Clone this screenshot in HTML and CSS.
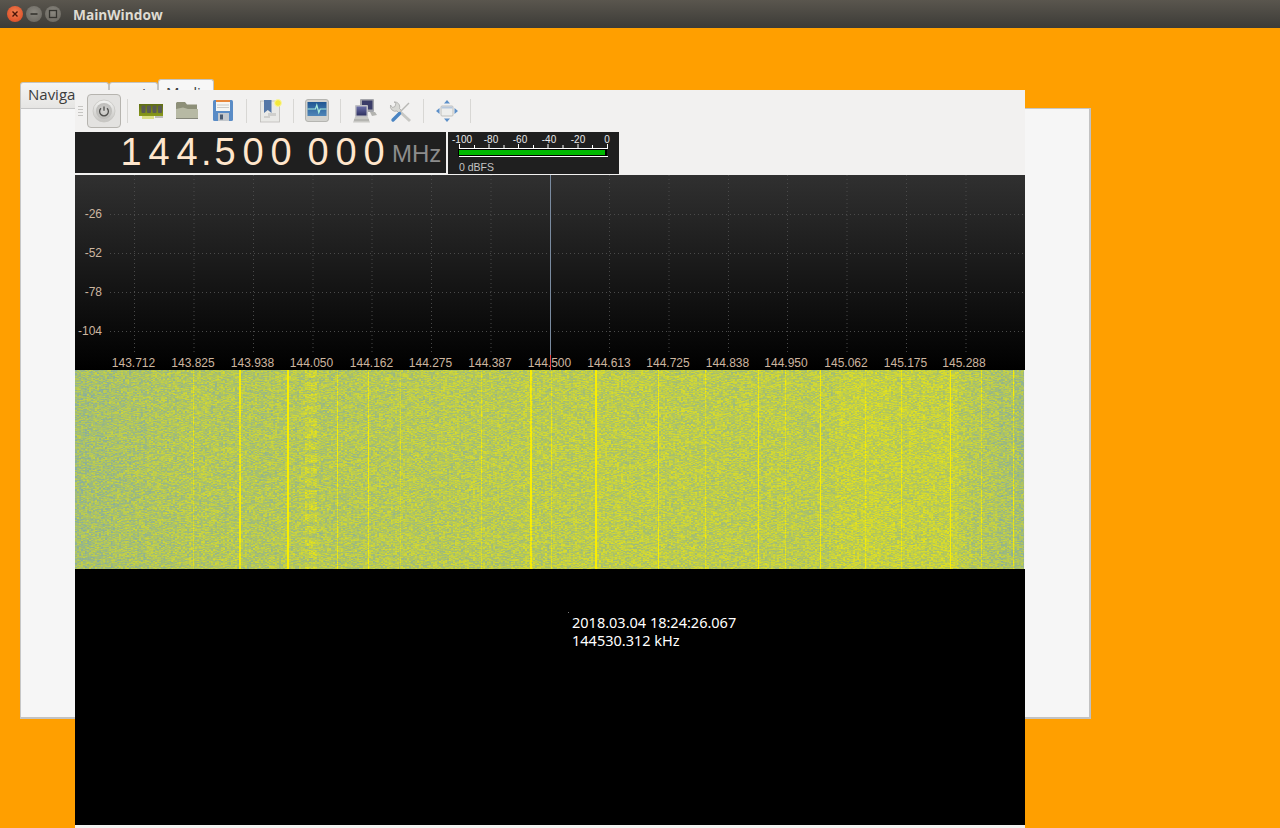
FILE: index.html
```html
<!DOCTYPE html>
<html lang="en">
<head>
  <meta charset="UTF-8">
  <title>MainWindow</title>
  <link rel="stylesheet" href="styles.css">
</head>
<body>
  <div class="titlebar">
    <div class="win-buttons">
      <span class="win-btn close">
        <svg width="10" height="10" viewBox="0 0 10 10"><path d="M2.5 2.5l5 5M7.5 2.5l-5 5" stroke="#4a1408" stroke-width="1.4"/></svg>
      </span>
      <span class="win-btn">
        <svg width="10" height="10" viewBox="0 0 10 10"><path d="M1.5 5h7" stroke="#35342f" stroke-width="1.6"/></svg>
      </span>
      <span class="win-btn">
        <svg width="10" height="10" viewBox="0 0 10 10"><rect x="1.5" y="1.5" width="7" height="7" fill="none" stroke="#35342f" stroke-width="1.3"/></svg>
      </span>
    </div>
    <span class="win-title">MainWindow</span>
  </div>

  <div class="tabwidget">
    <div class="tabbar">
      <div class="tab tab-nav">Navigation</div>
      <div class="tab tab-mid">Audio</div>
      <div class="tab tab-active">Media</div>
    </div>
    <div class="tabpanel"></div>
  </div>

  <div class="sdr">
    <div class="toolbar">
      <div class="grip"></div>
      <button class="tool tool-on">
        <svg width="26" height="26" viewBox="0 0 26 26">
          <defs>
            <linearGradient id="pw" x1="0" y1="0" x2="0" y2="1"><stop offset="0" stop-color="#f4f4f2"/><stop offset="1" stop-color="#c4c3c0"/></linearGradient>
            <radialGradient id="pw2"><stop offset="0" stop-color="#d6d5d2"/><stop offset="1" stop-color="#bdbcb9"/></radialGradient>
          </defs>
          <circle cx="13" cy="13" r="11" fill="url(#pw)" stroke="#c6c5c2" stroke-width="0.8"/>
          <circle cx="13" cy="13" r="8" fill="url(#pw2)"/>
          <path d="M10 10.2a4.4 4.4 0 1 0 6 0" fill="none" stroke="#4f4f4d" stroke-width="1.3"/>
          <path d="M13 8.4v4.4" stroke="#4f4f4d" stroke-width="1.3"/>
        </svg>
      </button>
      <div class="sep"></div>
      <button class="tool">
        <svg width="26" height="26" viewBox="0 0 26 26">
          <defs>
            <linearGradient id="board" x1="0" y1="0" x2="0" y2="1"><stop offset="0" stop-color="#5f6e12"/><stop offset="1" stop-color="#8a9a1c"/></linearGradient>
          </defs>
          <rect x="1" y="6" width="24" height="12" fill="url(#board)"/>
          <rect x="3.500" y="7.500" width="4" height="7.500" rx="1" fill="#5a5b54"/>
          <rect x="9" y="7.500" width="4" height="7.500" rx="1" fill="#5a5b54"/>
          <rect x="14.500" y="7.500" width="4" height="7.500" rx="1" fill="#5a5b54"/>
          <rect x="20" y="7.500" width="4" height="7.500" rx="1" fill="#5a5b54"/>
          <path d="M5 18v3M7 18v3M9 18v3M11 18v3M13 18v3M15 18v3" stroke="#c8d030" stroke-width="1.1"/>
          <rect x="17" y="18" width="8" height="2" fill="#8a8a80" opacity="0.5"/>
        </svg>
      </button>
      <button class="tool">
        <svg width="26" height="26" viewBox="0 0 26 26">
          <path d="M3 4h8l2 2.500h10v6H2V5z" fill="#8d8f78"/>
          <path d="M2 11l7-1.500 5 1.500h10v9a1 1 0 0 1-1 1H3a1 1 0 0 1-1-1z" fill="#b7b9a4"/>
          <path d="M2 20h22v1H2z" fill="#85867a"/>
        </svg>
      </button>
      <button class="tool">
        <svg width="26" height="26" viewBox="0 0 26 26">
          <rect x="3" y="2" width="20" height="21" rx="1.500" fill="#5a8cc6"/>
          <rect x="6" y="2" width="14" height="11" fill="#f6f6f2"/>
          <rect x="6" y="2" width="14" height="2" fill="#e8883a"/>
          <path d="M7 7h12M7 9.500h12" stroke="#c0c0bc" stroke-width="0.8"/>
          <rect x="8" y="15" width="11" height="8" fill="#c4c8cc"/>
          <rect x="10" y="16.500" width="3" height="5" fill="#4a5a70"/>
        </svg>
      </button>
      <div class="sep"></div>
      <button class="tool">
        <svg width="26" height="26" viewBox="0 0 26 26">
          <rect x="3.500" y="3" width="19" height="21" fill="#e9e9e6" stroke="#bdbcb8" stroke-width="0.8"/>
          <path d="M7 2h7.500v13l-3.700-3-3.800 3z" fill="#5577a6"/>
          <path d="M11 15h8v3h-8zM7 18h6v2H7z" fill="#cfcfcc"/>
          <circle cx="21" cy="5" r="3.400" fill="#f4e83a" stroke="#faf6a0" stroke-width="1"/>
        </svg>
      </button>
      <div class="sep"></div>
      <button class="tool">
        <svg width="26" height="26" viewBox="0 0 26 26">
          <defs>
            <linearGradient id="scr" x1="0" y1="0" x2="0" y2="1"><stop offset="0" stop-color="#1f5692"/><stop offset="1" stop-color="#4f86b8"/></linearGradient>
          </defs>
          <rect x="1.500" y="1.500" width="23" height="22" rx="2.500" fill="#d2d2ce" stroke="#a9a9a5" stroke-width="0.8"/>
          <rect x="3.500" y="4" width="19" height="14" fill="url(#scr)"/>
          <path d="M3.500 11h8l1.300-4 2 7.500 1.400-3.500h6.300" fill="none" stroke="#a8ecdc" stroke-width="1.200"/>
        </svg>
      </button>
      <div class="sep"></div>
      <button class="tool">
        <svg width="26" height="26" viewBox="0 0 26 26">
          <defs>
            <linearGradient id="crt" x1="0" y1="0" x2="0" y2="1"><stop offset="0" stop-color="#6a6ea8"/><stop offset="1" stop-color="#2e3060"/></linearGradient>
          </defs>
          <rect x="9" y="1" width="14" height="13" rx="1" fill="#a4a5aa"/>
          <rect x="11" y="2.500" width="10.500" height="9" fill="#3a3c68"/>
          <path d="M19 14h5l2 3-5 1z" fill="#b4b4b0"/>
          <rect x="4" y="7" width="13" height="12" rx="1" fill="#c0c0c4"/>
          <rect x="5.500" y="8.500" width="10" height="9" fill="url(#crt)"/>
          <path d="M4 19h13l2 5.500H2z" fill="#c8c8c4"/>
          <path d="M3 22h15" stroke="#989894" stroke-width="0.8"/>
        </svg>
      </button>
      <button class="tool">
        <svg width="26" height="26" viewBox="0 0 26 26">
          <path d="M10 11L23 23" stroke="#c8c8c4" stroke-width="3"/>
          <path d="M9 5l-1 3.500-2.500 1L3.500 7a5 5 0 0 0 6.500 6l2 2 2.500-2.500-2-2A5 5 0 0 0 7 4z" fill="#d8d8d4" stroke="#a4a4a0" stroke-width="0.7"/>
          <path d="M22 5l-9 9" stroke="#b8b8b4" stroke-width="1.500"/>
          <path d="M12.500 15.500L6 22" stroke="#4a84c2" stroke-width="3.400" stroke-linecap="round"/>
        </svg>
      </button>
      <div class="sep"></div>
      <button class="tool">
        <svg width="26" height="26" viewBox="0 0 26 26">
          <rect x="7" y="8" width="12" height="10" rx="1" fill="#eeeeec" stroke="#b4b4b0" stroke-width="0.8"/>
          <rect x="7.500" y="8.500" width="11" height="2" fill="#b8c8dc"/>
          <path d="M13 2l3 3.500h-6zM13 24l-3-3.500h6zM2 13l3.500-3v6zM24 13l-3.500 3v-6z" fill="#5d90c8"/>
        </svg>
      </button>
      <div class="sep"></div>
    </div>

    <div class="readout">
      <div class="freq">
        <span class="digit">1</span><span class="digit">4</span><span class="digit">4</span><span class="dot">.</span><span class="digit">5</span><span class="digit">0</span><span class="digit">0</span><span class="gap"></span><span class="digit">0</span><span class="digit">0</span><span class="digit">0</span>
        <span class="unit">MHz</span>
      </div>
      <div class="meter">
        <svg width="171" height="42" viewBox="0 0 171 42">
          <g class="meter-labels">
            <text x="14" y="10.500">-100</text>
            <text x="43" y="10.500">-80</text>
            <text x="72" y="10.500">-60</text>
            <text x="101" y="10.500">-40</text>
            <text x="130" y="10.500">-20</text>
            <text x="159" y="10.500">0</text>
          </g>
          <path d="M11.500 12v4M26.500 13v3M41 12v4M56 13v3M70.500 12v4M85.500 13v3M100 12v4M115 13v3M130 12v4M144.500 13v3M159.500 12v4" stroke="#fff" stroke-width="1"/>
          <path d="M11 16.500h149M11 24.500h149" stroke="#fff" stroke-width="1"/>
          <rect x="10" y="17" width="149" height="7" fill="#000"/>
          <rect x="11" y="18" width="146" height="5" fill="#00b800"/>
          <text class="meter-db" x="11" y="39">0 dBFS</text>
        </svg>
      </div>
    </div>

    <div class="plot">
      <svg width="950" height="195" viewBox="0 0 950 195">
        <defs>
          <linearGradient id="bg" x1="0" y1="0" x2="0" y2="1"><stop offset="0" stop-color="#303030"/><stop offset="1" stop-color="#000"/></linearGradient>
        </defs>
        <rect width="950" height="195" fill="url(#bg)"/>
        <path class="grid" d="M59.500 0V178M119 0V178M178.500 0V178M238 0V178M297 0V178M356.500 0V178M416 0V178M534.500 0V178M594 0V178M653.500 0V178M712.500 0V178M772 0V178M831.500 0V178M891 0V178M35 39.500H950M35 78.500H950M35 117.500H950M35 156.500H950"/>
        <g class="ylabels">
          <text x="27" y="43">-26</text>
          <text x="27" y="82">-52</text>
          <text x="27" y="121">-78</text>
          <text x="27" y="160">-104</text>
        </g>
        <g class="xlabels">
          <text x="58.500" y="192">143.712</text>
          <text x="118" y="192">143.825</text>
          <text x="177.500" y="192">143.938</text>
          <text x="236.500" y="192">144.050</text>
          <text x="296.500" y="192">144.162</text>
          <text x="355.500" y="192">144.275</text>
          <text x="415" y="192">144.387</text>
          <text x="474.500" y="192">144.500</text>
          <text x="534" y="192">144.613</text>
          <text x="593" y="192">144.725</text>
          <text x="652.500" y="192">144.838</text>
          <text x="711" y="192">144.950</text>
          <text x="771" y="192">145.062</text>
          <text x="830.500" y="192">145.175</text>
          <text x="889" y="192">145.288</text>
        </g>
        <path d="M475.500 0V180" stroke="#7a8ba0" stroke-width="1"/>
        <path d="M475.500 180V195" stroke="#ee4444" stroke-width="1"/>
      </svg>
    </div>

    <canvas id="waterfall" width="949" height="199"></canvas>

    <div class="history">
      <div class="readback">2018.03.04 18:24:26.067<br>144530.312 kHz</div>
    </div>
  </div>

  <script src="script.js"></script>
</body>
</html>
```

FILE: styles.css
```css
body {
  margin: 0;
  width: 1280px;
  height: 828px;
  overflow: hidden;
  position: relative;
  background-color: #ff9f00;
  font-family: "Open Sans", "Noto Sans", sans-serif;
}

.titlebar {
  height: 28px;
  display: flex;
  align-items: center;
  background: linear-gradient(#5a564e, #3c3b37);
}

.win-buttons {
  display: flex;
  gap: 3px;
  margin-left: 7px;
}

.win-btn {
  width: 16px;
  height: 16px;
  border-radius: 50%;
  display: flex;
  align-items: center;
  justify-content: center;
  background: radial-gradient(circle at 50% 40%, #8a877f, #66635c);
  border: 0;
}

.win-btn.close {
  background: radial-gradient(circle at 50% 40%, #f08050, #d8431f);
}

.win-title {
  margin-left: 12px;
  font-size: 13.700px;
  font-weight: 700;
  color: #dfdbd2;
}

/* tab widget behind the floating window */
.tabwidget {
  position: absolute;
  left: 20px;
  top: 79px;
  width: 1071px;
  height: 640px;
  display: flex;
  flex-direction: column;
}

.tabbar {
  display: flex;
  align-items: flex-end;
  height: 29px;
  font-size: 15px;
  color: #3c3c3c;
}

.tab {
  height: 26px;
  line-height: 22px;
  box-sizing: border-box;
  background: linear-gradient(#f4f4f3, #e6e5e3);
  border: 1px solid #c4c3c0;
  border-bottom: 0;
  border-radius: 3px 3px 0 0;
  overflow: hidden;
}

.tab-nav {
  width: 89px;
  padding-left: 7px;
}

.tab-mid {
  width: 49px;
  padding-left: 8px;
}

.tab-active {
  width: 56px;
  height: 29px;
  padding-left: 7px;
  line-height: 25px;
  background: #f7f7f7;
}

.tabpanel {
  flex: 1;
  box-sizing: border-box;
  background-color: #f6f6f6;
  border: 1px solid #c6c6c6;
  border-right: 2px solid #c2c2c2;
  border-bottom: 2px solid #c2c2c2;
}

/* floating gqrx window */
.sdr {
  position: absolute;
  left: 75px;
  top: 90px;
  width: 950px;
  height: 738px;
  display: flex;
  flex-direction: column;
  background-color: #f2f1f0;
}

.toolbar {
  height: 42px;
  flex: none;
  display: flex;
  align-items: center;
  padding-left: 3px;
  box-sizing: border-box;
}

.grip {
  width: 5px;
  height: 11px;
  margin-right: 3px;
  background: repeating-linear-gradient(#c6c5c2 0 1px, transparent 1px 3px);
}

.tool {
  width: 34px;
  height: 34px;
  margin: 0 1px;
  padding: 0;
  border: 1px solid transparent;
  border-radius: 4px;
  background: none;
  display: flex;
  align-items: center;
  justify-content: center;
}

.tool-on {
  background-color: #e3e2e0;
  border-color: #b6b4af;
}

.sep {
  width: 1px;
  height: 24px;
  margin: 0 5px;
  background-color: #d8d7d4;
}

.readout {
  height: 43px;
  flex: none;
  display: flex;
  align-items: flex-start;
}

.freq {
  width: 371px;
  height: 41px;
  display: flex;
  align-items: center;
  justify-content: flex-end;
  background-color: #1f1f1f;
  color: #ffe6cc;
  font-family: "Liberation Sans", sans-serif;
  font-size: 38px;
}

.digit {
  width: 28px;
  text-align: center;
}

.dot {
  width: 10px;
  text-align: center;
}

.gap {
  width: 9px;
}

.unit {
  width: 49px;
  margin: 3px 5px 0 4px;
  font-size: 24px;
  color: #8c8c8c;
}

.meter {
  margin-left: 2px;
  width: 171px;
  height: 42px;
  background-color: #1f1f1f;
}

.meter svg, .plot svg {
  display: block;
}

.meter-labels text {
  font-family: "Liberation Sans", sans-serif;
  font-size: 10px;
  fill: #e8e8e8;
  text-anchor: middle;
}

.meter-db {
  font-family: "Liberation Sans", sans-serif;
  font-size: 10.500px;
  fill: #c4c4c4;
}

.plot {
  height: 195px;
  flex: none;
}

.grid {
  fill: none;
  stroke: #4a4a4a;
  stroke-width: 1;
  stroke-dasharray: 1 3;
}

.ylabels text, .xlabels text {
  font-family: "Liberation Sans", sans-serif;
  font-size: 12px;
  fill: #cdb6a0;
}

.ylabels text {
  text-anchor: end;
}

.xlabels text {
  text-anchor: middle;
}

#waterfall {
  display: block;
  flex: none;
  width: 949px;
  height: 199px;
}

.history {
  flex: none;
  height: 256px;
  background-color: #000;
  position: relative;
}

.readback {
  position: absolute;
  left: 497px;
  top: 45px;
  font-size: 14.500px;
  line-height: 17.500px;
  color: #fff;
  font-family: "Noto Sans", sans-serif;
}

.readback::before {
  content: "";
  position: absolute;
  left: -4px;
  top: -2px;
  width: 1px;
  height: 1px;
  background-color: #777;
}
```

FILE: script.js
```js
// fake waterfall noise, seeded so every load looks the same
let seed = 12345;
function rnd() {
  seed = (seed * 1664525 + 1013904223) >>> 0;
  return seed / 4294967296;
}

const canvas = document.getElementById('waterfall');
const ctx = canvas.getContext('2d');
const w = canvas.width;
const h = canvas.height;
const img = ctx.createImageData(w, h);

// [x in the canvas, strength] of the carriers
const carriers = [
  [118, 0.28], [164, 0.55], [165, 0.55], [212, 1.0], [213, 1.0], [262, 0.45], [293, 0.5],
  [325, 0.25], [406, 0.3], [455, 0.6], [456, 0.6], [476, 0.25], [520, 0.8], [521, 0.7],
  [583, 0.55], [630, 0.25], [683, 0.5], [710, 0.25], [745, 0.55], [790, 0.3], [826, 0.3],
  [875, 0.7], [906, 0.3], [938, 0.4]
];

const colBias = new Float32Array(w);
const carrier = new Float32Array(w);
for (let x = 0; x < w; x++) {
  colBias[x] = (rnd() - 0.5) * 0.05;
}
carriers.forEach(([x, s]) => { carrier[x] = s; });

function base(x) {
  const t = x / w;
  let b = 0.36;
  b += 0.1 * Math.min(1, t / 0.12);        // blue at the left edge
  b += 0.05 * Math.min(1, Math.max(0, (t - 0.25) / 0.3));
  if (t > 0.8 && t < 0.93) b += 0.05;
  if (t > 0.93) b -= (t - 0.93) * 2;       // roll off at the right edge
  return b;
}

function lerp(a, b, t) {
  return a + (b - a) * t;
}

function colour(v) {
  if (v < 0.45) {
    const t = Math.max(0, v / 0.45);
    return [lerp(110, 178, t), lerp(158, 198, t), lerp(200, 92, t)];
  }
  const t = Math.min(1, (v - 0.45) / 0.45);
  return [lerp(178, 250, t), lerp(198, 238, t), lerp(92, 0, t)];
}

// noise cells, 2x1 px, keep the look of the fft bins
const cols = Math.ceil(w / 2) + 1;
const cells = new Float32Array(cols * h);
for (let i = 0; i < cells.length; i++) {
  cells[i] = rnd() - 0.5;
}

for (let y = 0; y < h; y++) {
  for (let x = 0; x < w; x++) {
    const cell = cells[y * cols + Math.floor(x / 2)];
    let v = base(x) + colBias[x] + cell * 0.36 + (rnd() - 0.5) * 0.1;
    // carriers fade in and out a little
    if (carrier[x] > 0) v += carrier[x] * (0.8 + 0.2 * Math.sin(y / 23 + x));
    // wide dashed signal around 144.05 MHz
    if (x > 229 && x < 242 && y % 12 < 8) v += 0.14;
    const c = colour(v);
    const i = (y * w + x) * 4;
    img.data[i] = c[0];
    img.data[i + 1] = c[1];
    img.data[i + 2] = c[2];
    img.data[i + 3] = 255;
  }
}
ctx.putImageData(img, 0, 0);
```
